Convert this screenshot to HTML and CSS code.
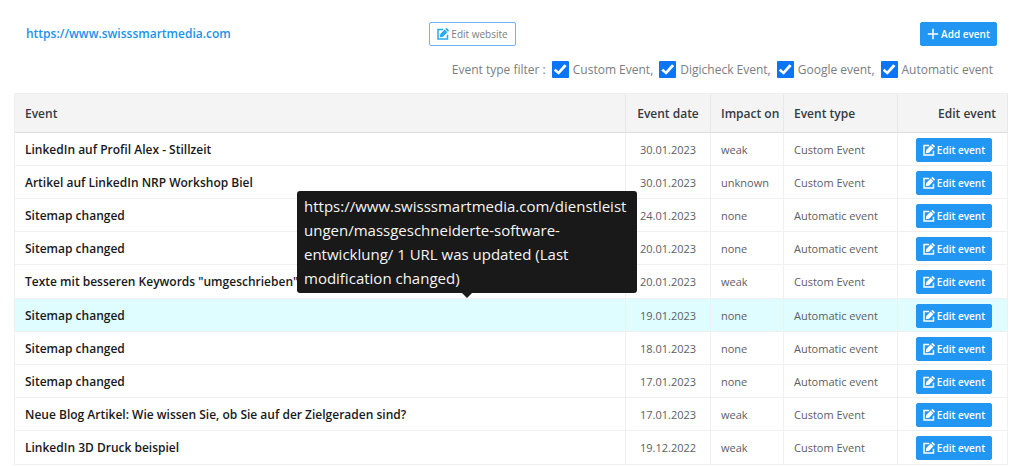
FILE: index.html
```html
<!DOCTYPE html>
<html lang="en">
<head>
<meta charset="utf-8">
<meta name="viewport" content="width=device-width, initial-scale=1">
<title>Events</title>
<link rel="stylesheet" href="styles.css">
</head>
<body>
<svg class="sprite" aria-hidden="true">
  <symbol id="icon-edit" viewBox="0 0 12 12">
    <path d="M6.200 1.500H1v9.500h9.500V6.800" fill="none" stroke="currentColor" stroke-width="1.500"/>
    <path d="M2.800 9.300l.5-3.300L7.700 1.600l2.700 2.700L6.100 8.700z M8.200 1.100l.8-.8q.5-.4 1 0l1.700 1.700q.4.500 0 1l-.8.800z" fill="currentColor"/>
  </symbol>
  <symbol id="icon-plus" viewBox="0 0 12 12">
    <path d="M6 .8v10.400M.8 6h10.400" fill="none" stroke="currentColor" stroke-width="1.500"/>
  </symbol>
</svg>
<main class="page">
  <header class="toolbar">
    <a class="site-link" href="#">https://www.swisssmartmedia.com</a>
    <button class="btn btn-outline" type="button"><svg class="icon"><use href="#icon-edit"/></svg>Edit website</button>
    <button class="btn btn-add" type="button"><svg class="icon"><use href="#icon-plus"/></svg>Add event</button>
  </header>
  <div class="filters" role="group" aria-labelledby="filter-title">
    <span id="filter-title">Event type filter :</span>
    <label class="filter"><input class="check" type="checkbox" checked>Custom Event,</label>
    <label class="filter"><input class="check" type="checkbox" checked>Digicheck Event,</label>
    <label class="filter"><input class="check" type="checkbox" checked>Google event,</label>
    <label class="filter"><input class="check" type="checkbox" checked>Automatic event</label>
  </div>
  <table class="events">
    <colgroup><col><col class="col-date"><col class="col-impact"><col class="col-type"><col class="col-edit"></colgroup>
    <thead>
      <tr><th>Event</th><th class="date">Event date</th><th>Impact on</th><th>Event type</th><th class="edit">Edit event</th></tr>
    </thead>
    <tbody>
      <tr><td class="name">LinkedIn auf Profil Alex - Stillzeit</td><td class="date">30.01.2023</td><td>weak</td><td>Custom Event</td><td class="action"><button class="btn" type="button"><svg class="icon"><use href="#icon-edit"/></svg>Edit event</button></td></tr>
      <tr><td class="name">Artikel auf LinkedIn NRP Workshop Biel</td><td class="date">30.01.2023</td><td>unknown</td><td>Custom Event</td><td class="action"><button class="btn" type="button"><svg class="icon"><use href="#icon-edit"/></svg>Edit event</button></td></tr>
      <tr><td class="name">Sitemap changed</td><td class="date">24.01.2023</td><td>none</td><td>Automatic event</td><td class="action"><button class="btn" type="button"><svg class="icon"><use href="#icon-edit"/></svg>Edit event</button></td></tr>
      <tr><td class="name">Sitemap changed</td><td class="date">20.01.2023</td><td>none</td><td>Automatic event</td><td class="action"><button class="btn" type="button"><svg class="icon"><use href="#icon-edit"/></svg>Edit event</button></td></tr>
      <tr><td class="name">Texte mit besseren Keywords "umgeschrieben"</td><td class="date">20.01.2023</td><td>weak</td><td>Custom Event</td><td class="action"><button class="btn" type="button"><svg class="icon"><use href="#icon-edit"/></svg>Edit event</button></td></tr>
      <tr class="active"><td class="name">Sitemap changed<div class="tooltip" role="tooltip">https://www.swisssmartmedia.com/dienstleistungen/massgeschneiderte-software-entwicklung/ 1 URL was updated (Last modification changed)</div></td><td class="date">19.01.2023</td><td>none</td><td>Automatic event</td><td class="action"><button class="btn" type="button"><svg class="icon"><use href="#icon-edit"/></svg>Edit event</button></td></tr>
      <tr><td class="name">Sitemap changed</td><td class="date">18.01.2023</td><td>none</td><td>Automatic event</td><td class="action"><button class="btn" type="button"><svg class="icon"><use href="#icon-edit"/></svg>Edit event</button></td></tr>
      <tr><td class="name">Sitemap changed</td><td class="date">17.01.2023</td><td>none</td><td>Automatic event</td><td class="action"><button class="btn" type="button"><svg class="icon"><use href="#icon-edit"/></svg>Edit event</button></td></tr>
      <tr><td class="name">Neue Blog Artikel: Wie wissen Sie, ob Sie auf der Zielgeraden sind?</td><td class="date">17.01.2023</td><td>weak</td><td>Custom Event</td><td class="action"><button class="btn" type="button"><svg class="icon"><use href="#icon-edit"/></svg>Edit event</button></td></tr>
      <tr><td class="name">LinkedIn 3D Druck beispiel</td><td class="date">19.12.2022</td><td>weak</td><td>Custom Event</td><td class="action"><button class="btn" type="button"><svg class="icon"><use href="#icon-edit"/></svg>Edit event</button></td></tr>
    </tbody>
  </table>
</main>
</body>
</html>
```
FILE: styles.css
```css
* { box-sizing: border-box; }
body {
  margin: 0;
  background: #fff;
  color: #5c6065;
  font: 12px/16px "Open Sans", "Noto Sans", sans-serif;
}
.sprite { position: absolute; width: 0; height: 0; }
.page { padding: 22px 16px 0 14px; }
.toolbar {
  display: grid;
  grid-template-columns: 403px 1fr auto;
  align-items: center;
  padding: 0 11px 0 12px;
}
.site-link { color: #1a93ec; font-weight: 600; text-decoration: none; }
.btn {
  display: inline-flex;
  align-items: center;
  justify-content: center;
  gap: 2px;
  width: 76px;
  height: 24px;
  padding: 0;
  border: 1px solid #2196f3;
  border-radius: 2px;
  background: #2196f3;
  color: #fff;
  font: 600 10px/16px "Open Sans", "Noto Sans", sans-serif;
  white-space: nowrap;
}
.btn-outline {
  width: 87px;
  background: #fff;
  border-color: #6db5f5;
  color: #7a7e83;
  font-weight: 400;
}
.btn-outline .icon { color: #28a9f0; }
.btn-add { width: 77px; }
.icon { width: 12px; height: 12px; flex: none; }
.filters {
  display: flex;
  flex-wrap: wrap;
  justify-content: flex-end;
  align-items: center;
  gap: 6px;
  padding: 14px 15px 14px 0;
  color: #7a7e83;
  line-height: 19px;
}
.filter { display: flex; align-items: center; gap: 4px; }
.check {
  appearance: none;
  width: 17px;
  height: 17px;
  margin: 0;
  border-radius: 1px;
  background: #0a75f5;
  display: grid;
  place-items: center;
}
.check:checked::before {
  content: "";
  width: 13px;
  height: 12px;
  background: #fff;
  clip-path: polygon(0 58%, 16% 44%, 35% 65%, 82% 6%, 100% 20%, 38% 94%);
}
.events {
  width: 100%;
  border-collapse: separate;
  border-spacing: 0;
  table-layout: fixed;
  border-left: 1px solid #f0f0f0;
}
.col-date { width: 85px; }
.col-impact { width: 73px; }
.col-type { width: 114px; }
.col-edit { width: 110px; }
.events th, .events td {
  padding: 1px 0 0 10px;
  border-right: 1px solid #f0f0f0;
  border-bottom: 1px solid #f0f0f0;
  text-align: left;
  white-space: nowrap;
}
.events th {
  height: 40px;
  background: #f4f4f4;
  border-top: 1px solid #eee;
  border-right-color: #e8e8e8;
  border-bottom-color: #ddd;
  color: #343b43;
  font-weight: 600;
}
.events td { height: 33px; font-size: 11px; }
.events tr:nth-child(5n) td { height: 34px; }
.events .date { padding-left: 0; text-align: center; }
.events th.edit { padding-right: 11px; text-align: right; }
.events td.action { padding-right: 15px; text-align: right; }
.action .btn { vertical-align: middle; }
.events .name { position: relative; color: #17191b; font-size: 12px; font-weight: 600; }
.active td { background: #dffdff; }
.tooltip {
  position: absolute;
  z-index: 1;
  right: -12px;
  bottom: calc(100% + 6px);
  width: 340px;
  padding: 3px 7px;
  border-radius: 3px;
  background: #191919;
  color: #f5f5f5;
  font-size: 15px;
  font-weight: 400;
  line-height: 24px;
  white-space: normal;
  word-break: break-word;
}
.tooltip::after {
  content: "";
  position: absolute;
  top: 100%;
  left: 50%;
  margin-left: -5px;
  border: 5px solid transparent;
  border-top-color: #191919;
  border-bottom: 0;
}
```
